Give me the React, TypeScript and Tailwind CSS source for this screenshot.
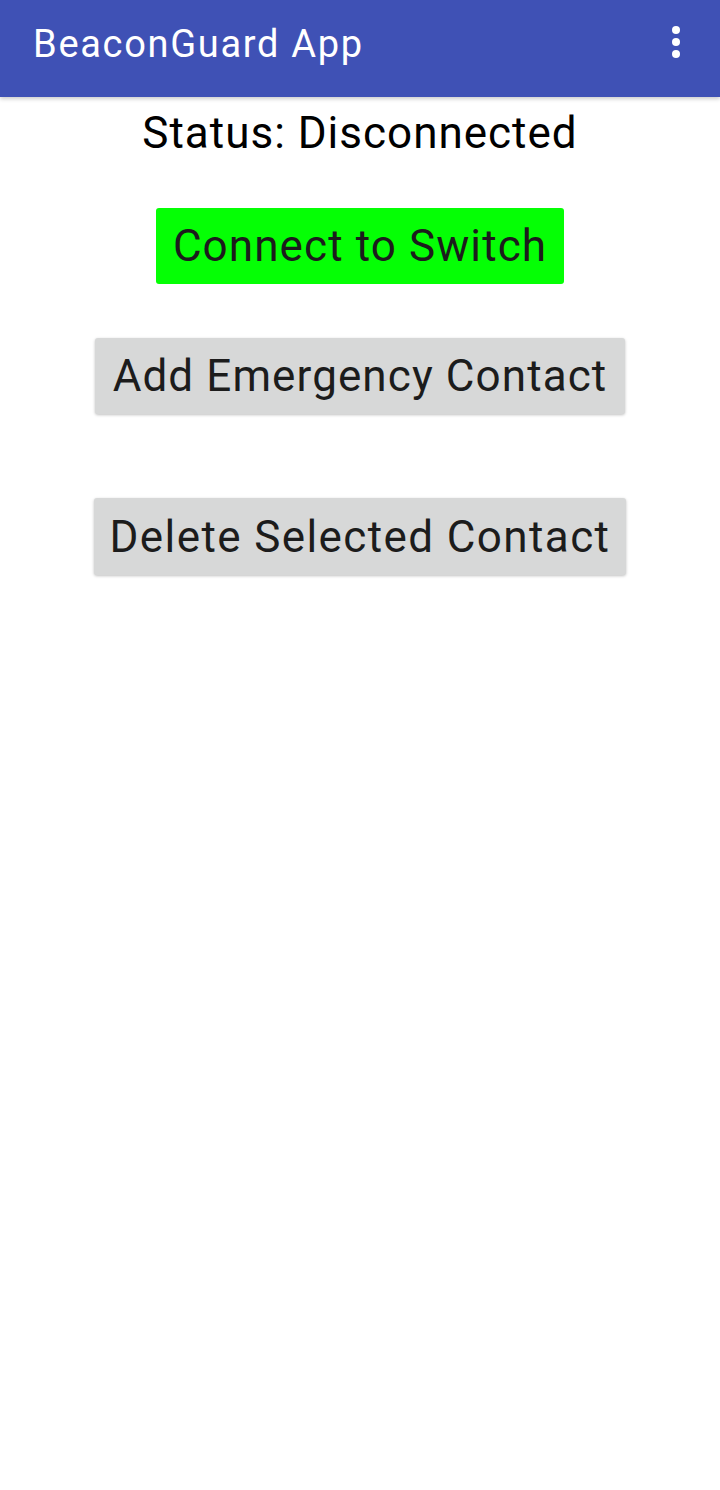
import React from "react";

const font = { fontFamily: "Roboto, 'Noto Sans', sans-serif" };

function MoreIcon() {
  return (
    <svg width="10" height="34" viewBox="0 0 10 34" className="fill-white">
      <circle cx="5" cy="5" r="4" />
      <circle cx="5" cy="17" r="4" />
      <circle cx="5" cy="29" r="4" />
    </svg>
  );
}

export default function App() {
  return (
    <div className="min-h-[1490px] w-[720px] bg-white" style={font}>
      {/* App bar */}
      <div className="flex h-[97px] items-start justify-between bg-[#3f51b5] pl-[33px] pr-[39px] shadow-[0_2px_4px_rgba(0,0,0,0.2)]">
        <h1 className="mt-[18px] text-[38px] leading-[52px] tracking-[1.7px] text-white">BeaconGuard App</h1>
        <div className="mt-[25px]">
          <MoreIcon />
        </div>
      </div>

      {/* Content */}
      <div className="flex flex-col items-center">
        <p className="mt-[8px] text-[44px] leading-[56px] tracking-[1px] text-black">Status: Disconnected</p>

        <button className="mt-[47px] h-[76px] rounded-[3px] bg-[#05ff05] px-[17px] text-[44px] tracking-[1.1px] text-[#1c1c1c]">
          Connect to Switch
        </button>

        <button className="mt-[54px] h-[76px] rounded-[3px] bg-[#d7d8d8] px-[18px] text-[44px] tracking-[1.1px] text-[#1c1c1c] shadow-[0_1px_3px_rgba(0,0,0,0.25)]">
          Add Emergency Contact
        </button>

        <button className="mt-[84px] h-[77px] rounded-[3px] bg-[#d7d8d8] px-[16px] text-[44px] tracking-[1.4px] text-[#1c1c1c] shadow-[0_1px_3px_rgba(0,0,0,0.25)]">
          Delete Selected Contact
        </button>
      </div>
    </div>
  );
}
